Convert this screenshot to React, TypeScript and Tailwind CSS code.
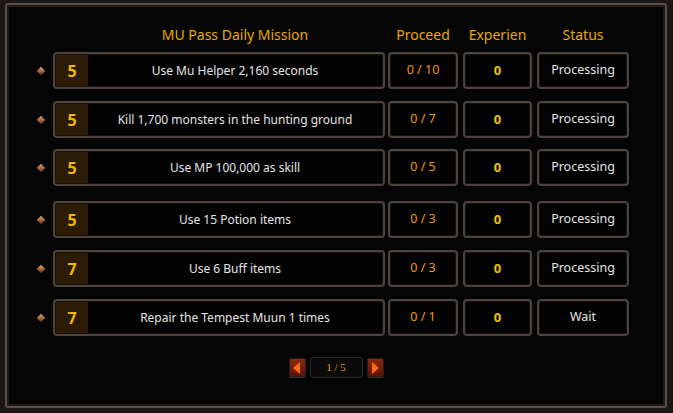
import React from 'react';

const missions = [
  { lv: 5, text: 'Use Mu Helper 2,160 seconds', prog: '0 / 10', exp: '0', status: 'Processing', mt: 'mt-[7px]' },
  { lv: 5, text: 'Kill 1,700 monsters in the hunting ground', prog: '0 / 7', exp: '0', status: 'Processing', mt: 'mt-[12px]' },
  { lv: 5, text: 'Use MP 100,000 as skill', prog: '0 / 5', exp: '0', status: 'Processing', mt: 'mt-[11px]' },
  { lv: 5, text: 'Use 15 Potion items', prog: '0 / 3', exp: '0', status: 'Processing', mt: 'mt-[15px]' },
  { lv: 7, text: 'Use 6 Buff items', prog: '0 / 3', exp: '0', status: 'Processing', mt: 'mt-[12px]' },
  { lv: 7, text: 'Repair the Tempest Muun 1 times', prog: '0 / 1', exp: '0', status: 'Wait', mt: 'mt-[12px]' },
];

const box = 'h-[37px] rounded-[4px] border-2 border-[#4d433c] bg-[#030303] shadow-[inset_0_0_0_1px_#151210]';

function Bullet() {
  return (
    <div className="flex w-[10px] items-center justify-center">
      <div className="h-[6px] w-[6px] rotate-45 bg-gradient-to-br from-[#e0a878] via-[#a86a40] to-[#5a3018]" />
    </div>
  );
}

function Arrow({ dir }: { dir: 'left' | 'right' }) {
  return (
    <div className="flex h-[19px] w-[17px] items-center justify-center rounded-[2px] border border-[#2a1a14] bg-gradient-to-b from-[#8a2a10] to-[#5a1406] shadow-[0_1px_0_#3a3030]">
      <svg width="8" height="12" viewBox="0 0 8 12">
        {dir === 'left' ? (
          <polygon points="7,0 7,12 0,6" fill="#ff6a10" />
        ) : (
          <polygon points="1,0 1,12 8,6" fill="#ff6a10" />
        )}
      </svg>
    </div>
  );
}

export default function App() {
  return (
    <div
      className="h-[413px] w-[673px] bg-[#1a1715] pb-[5px] pl-[5px] pr-[6px] pt-[3px]"
      style={{ fontFamily: '"Noto Sans", "Open Sans", sans-serif' }}
    >
      <div className="h-full w-full rounded-[3px] border-2 border-[#5a4e47] bg-[#050505] shadow-[inset_0_0_0_2px_#1e1917]">
        {/* Header */}
        <div className="mt-[18px] flex h-[22px] items-center text-[14px] text-[#eaa800]">
          <div className="ml-[46px] w-[332px] pl-[32px] text-center">MU Pass Daily Mission</div>
          <div className="ml-[3px] w-[70px] text-center">Proceed</div>
          <div className="ml-[5px] w-[69px] text-center">Experien</div>
          <div className="ml-[5px] w-[92px] text-center">Status</div>
        </div>

        {/* Rows */}
        {missions.map((m, i) => (
          <div key={i} className={`${m.mt} ml-[29px] flex items-center`}>
            <Bullet />
            <div className={`${box} ml-[7px] flex w-[332px] items-center p-px`}>
              <div className="flex h-full w-[32px] items-center justify-center bg-[#2c1c06] text-[16px] font-bold text-[#f2b800]">
                {m.lv}
              </div>
              <div className="flex-1 text-center text-[12px] text-[#e4e4e4]">{m.text}</div>
            </div>
            <div className={`${box} ml-[3px] flex w-[70px] items-center justify-center text-[12.5px] text-[#ee9a00]`}>
              {m.prog}
            </div>
            <div className={`${box} ml-[5px] flex w-[69px] items-center justify-center text-[13px] font-bold text-[#f0c000]`}>
              {m.exp}
            </div>
            <div className={`${box} ml-[5px] flex w-[92px] items-center justify-center text-[12.5px] text-[#e4e4e4]`}>
              {m.status}
            </div>
          </div>
        ))}

        {/* Pagination */}
        <div className="mt-[21px] flex items-center justify-center gap-[4px]">
          <Arrow dir="left" />
          <div className="flex h-[21px] w-[53px] items-center justify-center rounded-[3px] border border-[#2e2824] bg-[#0a0a0a] text-[11px] text-[#d89a20]" style={{ fontFamily: '"Liberation Serif", serif' }}>
            1 / 5
          </div>
          <Arrow dir="right" />
        </div>
      </div>
    </div>
  );
}
